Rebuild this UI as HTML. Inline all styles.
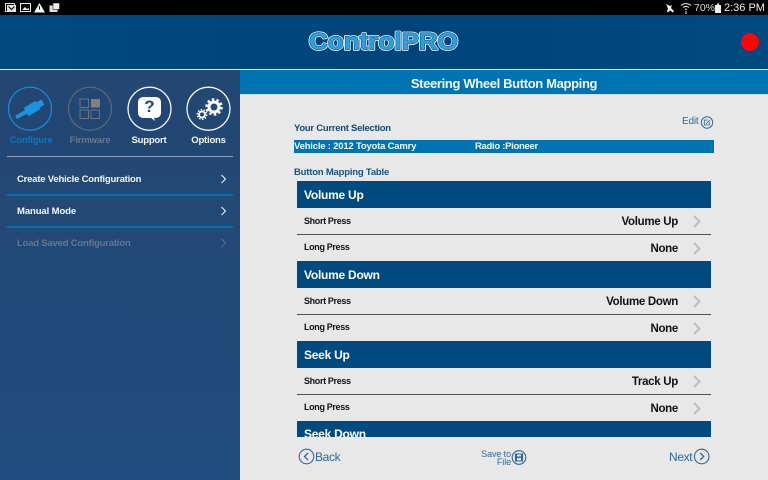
<!DOCTYPE html>
<html><head><meta charset="utf-8">
<style>
*{box-sizing:border-box;margin:0;padding:0}
html,body{width:768px;height:480px;overflow:hidden;background:#e8e8e8}
body{position:relative;font-family:"Liberation Sans",sans-serif;font-weight:bold}
.a{position:absolute;white-space:nowrap}
.hd{position:absolute;left:297px;width:414px;height:27px;background:#004a82;color:#fff;font-size:12px;letter-spacing:-.25px;line-height:28px;padding-left:7px;overflow:hidden}
.lb{position:absolute;left:304px;font-size:9px;letter-spacing:-.35px;color:#111;line-height:12px}
.vl{position:absolute;right:90px;font-size:11.5px;letter-spacing:-.3px;color:#111;line-height:14px}
.ln{position:absolute;left:297px;width:414px;height:1px;background:#555}
.ic{position:absolute;left:0;top:0}
.t{font-size:9.5px;line-height:12px;letter-spacing:-.2px}
</style></head><body>
<div class="a" style="left:0;top:0;width:768px;height:15px;background:#000"></div>
<div class="a" style="left:0;top:15px;width:768px;height:54px;background:linear-gradient(90deg,#004a82,#00447a 50%,#004a82)"></div>
<div class="a" style="left:0;top:69px;width:768px;height:1px;background:#d8e8f2"></div>
<div class="a" style="left:0;top:70px;width:240px;height:410px;background:linear-gradient(180deg,#234672,#1f4c7e)"></div>
<div class="a" style="left:240px;top:70px;width:528px;height:24px;background:#0074b2"></div>
<div class="a" style="left:240px;top:94px;width:528px;height:1px;background:#cfdde8"></div>
<div class="a" style="left:240px;top:70px;width:528px;line-height:27px;text-align:center;color:#f2f8fc;font-size:13px;letter-spacing:-.35px">Steering Wheel Button Mapping</div>

<svg class="ic" width="768" height="480" viewBox="0 0 768 480" fill="none">
<!-- status left icons -->
<rect x="5.500" y="3.500" width="9" height="8" stroke="#ddd"/><rect x="7" y="5" width="9" height="7" fill="#e4e4e4"/><path d="M8.500 6.500l3 3 3-3" stroke="#000"/>
<rect x="20.500" y="3.500" width="10" height="8" stroke="#eee"/><path d="M22 10l3-3 2 2 2-1v2z" fill="#eee"/>
<path d="M39.500 3L45 12.500H34z" fill="#f5f5f5"/><rect x="39" y="6" width="1" height="3.500" fill="#000"/>
<rect x="49.500" y="5.500" width="8" height="6.500" fill="#ddd"/><rect x="53" y="3" width="6.500" height="6.500" fill="#eee" stroke="#000" stroke-width=".5"/>
<!-- status right -->
<path d="M666 4l4 2 2-1-1 3 3 3-1 1.500-3-2-2 2-1-1 1-3z" fill="#eee"/>
<path d="M681 5.500c3-2.500 7-2.500 10 0M683 7.500c2-1.500 4-1.500 6 0M685 9.500c.8-.5 1.200-.5 2 0M686 11v3" stroke="#eee" stroke-width="1"/>
<rect x="715" y="5" width="6" height="8" fill="#eee"/><rect x="717" y="3.500" width="2" height="2" fill="#eee"/>
<!-- logo -->
<g font-family="Liberation Sans,sans-serif" font-weight="bold" font-size="24">
<text x="309" y="49.500" textLength="149" lengthAdjust="spacingAndGlyphs" stroke="#eef8fd" stroke-width="2.800" stroke-linejoin="round">ControlPRO</text>
<text x="309" y="49.500" textLength="149" lengthAdjust="spacingAndGlyphs" stroke="#0a5c9a" stroke-width="1.200" stroke-linejoin="round">ControlPRO</text>
<text x="309" y="49.500" textLength="149" lengthAdjust="spacingAndGlyphs" fill="#2f9fdc">ControlPRO</text>
</g>
<circle cx="750" cy="42" r="9" fill="#fb0505"/>
<!-- configure -->
<circle cx="30" cy="108.700" r="21.500" stroke="#1390dc" stroke-width="1.200"/>
<path d="M17.500 116.500L27 111.500" stroke="#1c93e0" stroke-width="4" stroke-linecap="round"/>
<path d="M26 112L38 105" stroke="#1c93e0" stroke-width="9.500"/>
<path d="M37 105.500L43 102" stroke="#1c93e0" stroke-width="6"/>
<!-- firmware -->
<circle cx="90" cy="108.700" r="21.500" stroke="#5d6b7c" stroke-width="1.200"/>
<rect x="80" y="99" width="8.500" height="8.500" stroke="#6a7482"/><rect x="91" y="99" width="9" height="8.500" fill="#837f7c"/>
<rect x="80" y="110" width="8.500" height="8.500" stroke="#6a7482"/><rect x="91" y="110" width="8.500" height="8.500" stroke="#6a7482"/>
<!-- support -->
<circle cx="149.500" cy="108.700" r="21.500" stroke="#f4f7fa" stroke-width="1.300"/>
<path d="M143 97h13a5 5 0 0 1 5 5v11a5 5 0 0 1-5 5h-2l1 3-4-3h-8a5 5 0 0 1-5-5v-11a5 5 0 0 1 5-5z" fill="#fff"/>
<!-- options -->
<circle cx="208.500" cy="108.700" r="21.500" stroke="#f4f7fa" stroke-width="1.300"/>
<circle cx="214" cy="107" r="5" stroke="#fff" stroke-width="3"/>
<circle cx="214" cy="107" r="7.500" stroke="#fff" stroke-width="2.500" stroke-dasharray="2.500 2.200"/>
<circle cx="202" cy="114.500" r="3" stroke="#fff" stroke-width="1.800"/>
<circle cx="202" cy="114.500" r="4.700" stroke="#fff" stroke-width="1.500" stroke-dasharray="1.500 1.450"/>
<!-- sidebar chevrons -->
<path d="M221.500 175l4 4-4 4M221.500 207l4 4-4 4" stroke="#e8eef4" stroke-width="1.100"/>
<path d="M221.500 239l4 4-4 4" stroke="#5c6f86" stroke-width="1.100"/>
<!-- row chevrons -->
<g stroke="#c0c0c0" stroke-width="2.200">
<path d="M694 216l5.500 5.500-5.500 5.500M694 243l5.500 5.500-5.500 5.500M694 296l5.500 5.500-5.500 5.500M694 323l5.500 5.500-5.500 5.500M694 376l5.500 5.500-5.500 5.500M694 403l5.500 5.500-5.500 5.500"/>
</g>
<!-- edit -->
<circle cx="707" cy="122.500" r="5.700" stroke="#2e6a9c" stroke-width="1"/><path d="M704.300 120h3.500M704.300 120v5h5v-3M706 124l4-4" stroke="#2e6a9c" stroke-width=".8"/>
<!-- back/next/save -->
<circle cx="306.500" cy="456.500" r="7.300" stroke="#2e6a9c" stroke-width="1.100"/><path d="M308 453l-3.500 3.500 3.500 3.500" stroke="#2e6a9c" stroke-width="1.300"/>
<circle cx="701.700" cy="456.500" r="7.300" stroke="#2e6a9c" stroke-width="1.100"/><path d="M700.200 453l3.500 3.500-3.500 3.500" stroke="#2e6a9c" stroke-width="1.300"/>
<circle cx="519" cy="457.500" r="6.800" stroke="#2e6a9c" stroke-width="1.100"/><rect x="515" y="453.500" width="8" height="8" fill="#2e6a9c"/><rect x="517" y="454.500" width="4" height="2" fill="#e8e8e8"/><rect x="517" y="458" width="4" height="2.500" fill="#dce4ea"/>
</svg>

<div class="a" style="left:137px;top:97px;width:25px;text-align:center;font-size:17px;line-height:19px;color:#1f4a7c">?</div>
<div class="a t" style="left:1px;top:135px;width:60px;text-align:center;color:#0f74b8">Configure</div>
<div class="a t" style="left:60px;top:135px;width:60px;text-align:center;color:#69778a">Firmware</div>
<div class="a t" style="left:119px;top:135px;width:60px;text-align:center;color:#f4f7fa">Support</div>
<div class="a t" style="left:178.500px;top:135px;width:60px;text-align:center;color:#f4f7fa">Options</div>
<div class="a" style="left:7px;top:156px;width:226px;height:1px;background:#8aa0bc"></div>
<div class="a t" style="left:17px;top:174px;color:#f4f7fa">Create Vehicle Configuration</div>
<div class="a" style="left:7px;top:194px;width:226px;height:2px;background:#0b6fae"></div>
<div class="a t" style="left:17px;top:206px;color:#f4f7fa;letter-spacing:-.1px">Manual Mode</div>
<div class="a" style="left:7px;top:226px;width:226px;height:2px;background:#0b6fae"></div>
<div class="a t" style="left:17px;top:238px;color:#66778c">Load Saved Configuration</div>

<div class="a t" style="left:294px;top:122.500px;color:#15477c;letter-spacing:-.27px">Your Current Selection</div>
<div class="a" style="left:682px;top:116px;font-size:10px;line-height:12px;color:#2e6a9c;font-weight:normal;letter-spacing:-.2px">Edit</div>
<div class="a" style="left:294px;top:140px;width:420px;height:13px;background:#0074b2"></div>
<div class="a t" style="left:294px;top:141px;color:#f2f8fc">Vehicle : 2012 Toyota Camry</div>
<div class="a t" style="left:475px;top:141px;color:#f2f8fc;letter-spacing:-.3px">Radio :Pioneer</div>
<div class="a t" style="left:294px;top:167px;color:#15528a">Button Mapping Table</div>

<div class="hd" style="top:181px">Volume Up</div>
<div class="lb" style="top:215px">Short Press</div><div class="vl" style="top:215px">Volume Up</div>
<div class="ln" style="top:234px"></div>
<div class="lb" style="top:241px">Long Press</div><div class="vl" style="top:242px">None</div>
<div class="hd" style="top:261px">Volume Down</div>
<div class="lb" style="top:295px">Short Press</div><div class="vl" style="top:295px">Volume Down</div>
<div class="ln" style="top:314px"></div>
<div class="lb" style="top:321px">Long Press</div><div class="vl" style="top:322px">None</div>
<div class="hd" style="top:341px">Seek Up</div>
<div class="lb" style="top:375px">Short Press</div><div class="vl" style="top:375px">Track Up</div>
<div class="ln" style="top:394px"></div>
<div class="lb" style="top:401px">Long Press</div><div class="vl" style="top:402px">None</div>
<div class="hd" style="top:421px;height:16px;line-height:27px">Seek Down</div>

<div class="a" style="left:315px;top:449.500px;font-size:12px;line-height:14px;color:#2e6a9c;font-weight:normal;letter-spacing:-.35px">Back</div>
<div class="a" style="left:669px;top:449.500px;font-size:12px;line-height:14px;color:#2e6a9c;font-weight:normal;letter-spacing:-.35px">Next</div>
<div class="a" style="left:480px;top:449.500px;width:31px;text-align:right;font-size:9px;line-height:8px;color:#2e6a9c;font-weight:normal;letter-spacing:-.1px">Save to<br>File</div>

<div class="a" style="left:694px;top:2px;font-size:10.500px;line-height:12px;color:#ddd;font-weight:normal">70%</div>
<div class="a" style="left:724px;top:2px;font-size:11px;line-height:13px;color:#eee;font-weight:normal">2:36 PM</div>
</body></html>
